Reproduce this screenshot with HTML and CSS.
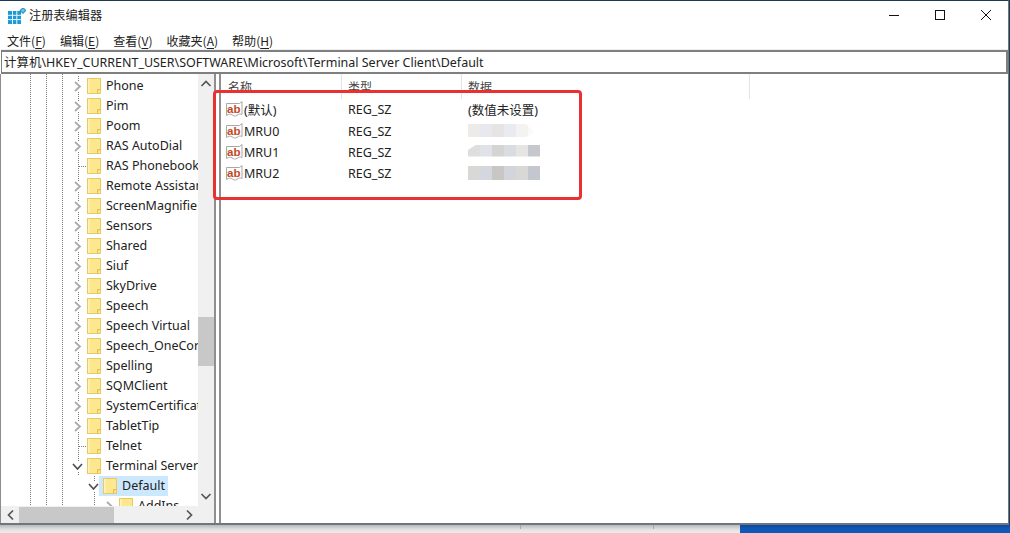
FILE: index.html
```html
<!DOCTYPE html>
<html lang="zh-CN">
<head>
<meta charset="utf-8">
<title>注册表编辑器</title>
<link rel="stylesheet" href="styles.css">
</head>
<body>
<svg class="defs" width="0" height="0" aria-hidden="true">
  <symbol id="folder" viewBox="0 0 14 16">
    <rect x="0.5" y="0.5" width="13" height="15" fill="#fde78f" stroke="#e9c964"/>
    <rect x="1" y="1" width="1.5" height="14" fill="#fff3bd"/>
    <path d="M10.5 15.5v-4h3" fill="#fbdc78" stroke="#e3bd50"/>
  </symbol>
  <symbol id="chev-r" viewBox="0 0 9 11">
    <path d="M2 1l5 4.5-5 4.5" fill="none" stroke="#a8a8a8" stroke-width="1.7"/>
  </symbol>
  <symbol id="chev-d" viewBox="0 0 11 9">
    <path d="M1 2l4.5 5 4.5-5" fill="none" stroke="#505050" stroke-width="1.7"/>
  </symbol>
  <symbol id="ab" viewBox="0 0 17 17">
    <path d="M.5 2.500h13l2.500-2v13c-2-1-3-.5-5 .8s-3 .7-5-.5-3-.5-5.500.7z" fill="#fff" stroke="#a8a8a8"/>
    <text x="7.800" y="11.500" text-anchor="middle" font-family="Liberation Sans" font-weight="700" font-size="11.500" fill="#c24a22">ab</text>
  </symbol>
</svg>
<div class="window">
  <header class="titlebar">
    <svg class="appicon" width="18" height="16" viewBox="0 0 18 16" aria-hidden="true">
      <path d="M0 3h13v13H0z" fill="#1a9ad6"/>
      <path d="M4.500 3v13M8.800 3v13M0 7.300h13M0 11.600h13" stroke="#e8f6fc" stroke-width="1"/>
      <rect x="13" y="0.500" width="4" height="4" fill="#6cc3ea" stroke="#2b8fc0" transform="rotate(45 15 2.500)"/>
    </svg>
    <span class="title">注册表编辑器</span>
    <div class="winbtns">
      <svg class="winbtn" width="46" height="30" viewBox="0 0 46 30" aria-hidden="true"><path d="M18 15.500h10" stroke="#111" fill="none"/></svg>
      <svg class="winbtn" width="46" height="30" viewBox="0 0 46 30" aria-hidden="true"><rect x="18.500" y="10.500" width="9" height="9" stroke="#111" fill="none"/></svg>
      <svg class="winbtn" width="46" height="30" viewBox="0 0 46 30" aria-hidden="true"><path d="M18 10l10 10M28 10L18 20" stroke="#111" fill="none"/></svg>
    </div>
  </header>
  <nav class="menu">
    <span>文件(<u>F</u>)</span>
    <span>编辑(<u>E</u>)</span>
    <span>查看(<u>V</u>)</span>
    <span>收藏夹(<u>A</u>)</span>
    <span>帮助(<u>H</u>)</span>
  </nav>
  <div class="address">计算机\HKEY_CURRENT_USER\SOFTWARE\Microsoft\Terminal Server Client\Default</div>
  <main class="panes">
    <section class="tree">
      <div class="tree-top">
        <div class="tree-view">
          <div class="siblings">
            <div class="row"><svg class="chev" width="9" height="11"><use href="#chev-r"/></svg><svg class="folder" width="14" height="16"><use href="#folder"/></svg><span class="label">Phone</span></div>
            <div class="row"><svg class="chev" width="9" height="11"><use href="#chev-r"/></svg><svg class="folder" width="14" height="16"><use href="#folder"/></svg><span class="label">Pim</span></div>
            <div class="row"><svg class="chev" width="9" height="11"><use href="#chev-r"/></svg><svg class="folder" width="14" height="16"><use href="#folder"/></svg><span class="label">Poom</span></div>
            <div class="row"><svg class="chev" width="9" height="11"><use href="#chev-r"/></svg><svg class="folder" width="14" height="16"><use href="#folder"/></svg><span class="label">RAS AutoDial</span></div>
            <div class="row"><span class="leaf"></span><svg class="folder" width="14" height="16"><use href="#folder"/></svg><span class="label">RAS Phonebook</span></div>
            <div class="row"><svg class="chev" width="9" height="11"><use href="#chev-r"/></svg><svg class="folder" width="14" height="16"><use href="#folder"/></svg><span class="label">Remote Assistance</span></div>
            <div class="row"><svg class="chev" width="9" height="11"><use href="#chev-r"/></svg><svg class="folder" width="14" height="16"><use href="#folder"/></svg><span class="label">ScreenMagnifier</span></div>
            <div class="row"><svg class="chev" width="9" height="11"><use href="#chev-r"/></svg><svg class="folder" width="14" height="16"><use href="#folder"/></svg><span class="label">Sensors</span></div>
            <div class="row"><svg class="chev" width="9" height="11"><use href="#chev-r"/></svg><svg class="folder" width="14" height="16"><use href="#folder"/></svg><span class="label">Shared</span></div>
            <div class="row"><svg class="chev" width="9" height="11"><use href="#chev-r"/></svg><svg class="folder" width="14" height="16"><use href="#folder"/></svg><span class="label">Siuf</span></div>
            <div class="row"><svg class="chev" width="9" height="11"><use href="#chev-r"/></svg><svg class="folder" width="14" height="16"><use href="#folder"/></svg><span class="label">SkyDrive</span></div>
            <div class="row"><svg class="chev" width="9" height="11"><use href="#chev-r"/></svg><svg class="folder" width="14" height="16"><use href="#folder"/></svg><span class="label">Speech</span></div>
            <div class="row"><svg class="chev" width="9" height="11"><use href="#chev-r"/></svg><svg class="folder" width="14" height="16"><use href="#folder"/></svg><span class="label">Speech Virtual</span></div>
            <div class="row"><svg class="chev" width="9" height="11"><use href="#chev-r"/></svg><svg class="folder" width="14" height="16"><use href="#folder"/></svg><span class="label">Speech_OneCore</span></div>
            <div class="row"><svg class="chev" width="9" height="11"><use href="#chev-r"/></svg><svg class="folder" width="14" height="16"><use href="#folder"/></svg><span class="label">Spelling</span></div>
            <div class="row"><svg class="chev" width="9" height="11"><use href="#chev-r"/></svg><svg class="folder" width="14" height="16"><use href="#folder"/></svg><span class="label">SQMClient</span></div>
            <div class="row"><svg class="chev" width="9" height="11"><use href="#chev-r"/></svg><svg class="folder" width="14" height="16"><use href="#folder"/></svg><span class="label">SystemCertificates</span></div>
            <div class="row"><svg class="chev" width="9" height="11"><use href="#chev-r"/></svg><svg class="folder" width="14" height="16"><use href="#folder"/></svg><span class="label">TabletTip</span></div>
            <div class="row"><span class="leaf"></span><svg class="folder" width="14" height="16"><use href="#folder"/></svg><span class="label">Telnet</span></div>
            <div class="row"><svg class="chev-open" width="11" height="9"><use href="#chev-d"/></svg><svg class="folder" width="14" height="16"><use href="#folder"/></svg><span class="label">Terminal Server Client</span></div>
          </div>
          <div class="children">
            <div class="row row-l2"><svg class="chev-open" width="11" height="9"><use href="#chev-d"/></svg><span class="selected"><svg class="folder" width="14" height="16"><use href="#folder"/></svg><span class="label">Default</span></span></div>
            <div class="row row-l3"><svg class="chev" width="9" height="11"><use href="#chev-r"/></svg><svg class="folder" width="14" height="16"><use href="#folder"/></svg><span class="label">AddIns</span></div>
          </div>
        </div>
        <div class="vscroll">
          <svg width="16" height="20" viewBox="0 0 16 20" aria-hidden="true"><path d="M3.500 12l4.500-4.500 4.500 4.500" fill="none" stroke="#555" stroke-width="1.700"/></svg>
          <div class="vtrack"><div class="vthumb"></div></div>
          <svg width="16" height="20" viewBox="0 0 16 20" aria-hidden="true"><path d="M3.500 8l4.500 4.500 4.500-4.500" fill="none" stroke="#555" stroke-width="1.700"/></svg>
        </div>
      </div>
      <div class="hscroll">
        <svg width="18" height="16" viewBox="0 0 18 16" aria-hidden="true"><path d="M12 3.500L7.500 8l4.500 4.500" fill="none" stroke="#555" stroke-width="1.700"/></svg>
        <div class="htrack"><div class="hthumb"></div></div>
        <svg width="19" height="16" viewBox="0 0 19 16" aria-hidden="true"><path d="M7 3.500L11.500 8 7 12.500" fill="none" stroke="#555" stroke-width="1.700"/></svg>
      </div>
    </section>
    <section class="list">
      <div class="list-head">
        <div class="hcell col-name hcell-first"><span>名称</span></div>
        <div class="hcell col-type"><span>类型</span></div>
        <div class="hcell col-data"><span>数据</span></div>
      </div>
      <div class="list-row"><div class="col-name name"><svg width="17" height="17"><use href="#ab"/></svg>(默认)</div><div class="col-type type">REG_SZ</div><div class="col-data data">(数值未设置)</div></div>
      <div class="list-row"><div class="col-name name"><svg width="17" height="17"><use href="#ab"/></svg>MRU0</div><div class="col-type type">REG_SZ</div><div class="col-data data"><span class="blur blur-a"></span></div></div>
      <div class="list-row"><div class="col-name name"><svg width="17" height="17"><use href="#ab"/></svg>MRU1</div><div class="col-type type">REG_SZ</div><div class="col-data data"><span class="blur blur-b"></span></div></div>
      <div class="list-row"><div class="col-name name"><svg width="17" height="17"><use href="#ab"/></svg>MRU2</div><div class="col-type type">REG_SZ</div><div class="col-data data"><span class="blur blur-c"></span></div></div>
      <div class="callout"></div>
    </section>
  </main>
</div>
<footer class="below">
  <div class="below-gray"><i></i><i></i></div>
  <div class="below-blue"></div>
</footer>
</body>
</html>
```
FILE: styles.css
```css
* { box-sizing: border-box; }
html, body { margin: 0; padding: 0; }
body {
  width: 1010px;
  height: 533px;
  overflow: hidden;
  display: flex;
  flex-direction: column;
  background: #1d3c55;
  font-family: "Noto Sans", "Noto Sans CJK SC", sans-serif;
  font-size: 13px;
  color: #1a1a1a;
}
.defs { position: absolute; }

.window {
  width: 1009px;
  height: 525px;
  flex: none;
  display: flex;
  flex-direction: column;
  background: #fff;
  border-top: 1px solid #1f3b50;
  border-bottom: 2px solid #6f7680;
  border-right: 1px solid #6f7680;
  overflow: hidden;
}

.titlebar { height: 29px; flex: none; display: flex; align-items: center; padding-left: 8px; }
.appicon { flex: none; }
.title { margin: 0 0 0 3px; font-family: "Noto Sans CJK SC", sans-serif; font-size: 12.200px; line-height: 29px; color: #222; }
.winbtns { margin-left: auto; display: flex; margin-right: -1px; }
.winbtn { display: block; margin-top: -1px; }

.menu { height: 20px; flex: none; display: flex; gap: 14px; padding: 2px 0 0 7px; align-items: center; font-family: "Noto Sans CJK SC", sans-serif; font-size: 12.050px; line-height: 18px; color: #222; }
.menu u { text-decoration-thickness: 1px; text-underline-offset: 2px; }

.address {
  height: 24px;
  flex: none;
  margin-left: 1px;
  padding-left: 2px;
  line-height: 22px;
  border: 1px solid #7f7f7f;
  border-width: 2px 2px 2px 1px;
  box-shadow: 0 -1px 0 #f0f0f0;
  white-space: nowrap;
  font-size: 12.480px;
  color: #222;
}

.panes { flex: 1; min-height: 0; display: flex; position: relative; }
.tree {
  width: 216px;
  flex: none;
  display: flex;
  flex-direction: column;
  border-left: 1px solid #8d8d8d;
  border-right: 2px solid #8f8f8f;
}
.tree-top { flex: 1; min-height: 0; display: flex; }
.tree-view {
  width: 197px;
  flex: none;
  overflow: hidden;
  padding-top: 2px;
  background-image:
    linear-gradient(#7c7c7c 50%, transparent 50%),
    linear-gradient(#7c7c7c 50%, transparent 50%),
    linear-gradient(#7c7c7c 50%, transparent 50%);
  background-size: 1px 2px;
  background-repeat: repeat-y;
  background-position: 29px 0, 45px 0, 61px 0;
}
.siblings {
  background-image: linear-gradient(#7c7c7c 50%, transparent 50%);
  background-size: 1px 2px;
  background-repeat: repeat-y;
  background-position: 77px 0;
  height: 400px;
}
.children {
  background-image: linear-gradient(#7c7c7c 50%, transparent 50%);
  background-size: 1px 2px;
  background-repeat: repeat-y;
  background-position: 93px 0;
}
.row { height: 20px; display: flex; align-items: center; padding-left: 72px; white-space: nowrap; }
.chev { flex: none; width: 9px; height: 11px; background: #fff; display: block; margin-right: 5px; }
.chev-open { flex: none; width: 11px; height: 9px; background: #fff; display: block; margin: 0 4px 0 -1px; }
.leaf { flex: none; width: 14px; height: 1px; background-image: linear-gradient(90deg, #7c7c7c 50%, transparent 50%); background-size: 2px 1px; background-repeat: repeat-x; background-clip: content-box; padding-left: 5px; }
.folder { flex: none; display: block; }
.label { margin-left: 5px; font-size: 12.500px; line-height: 20px; color: #222; }
.row-l2 { padding-left: 88px; }
.row-l3 { padding-left: 104px; }
.selected { display: flex; align-items: center; height: 20px; background: #cce8ff; padding: 0 3px 0 4px; margin-left: -4px; }

.vscroll { width: 16px; flex: none; background: #f0f0f0; display: flex; flex-direction: column; }
.vscroll svg { display: block; flex: none; }
.vtrack { flex: 1; padding-top: 223px; }
.vthumb { height: 49px; background: #c8c8c8; }

.hscroll { height: 17px; flex: none; display: flex; background: #f0f0f0; width: 213px; padding-top: 1px; }
.hscroll svg { display: block; flex: none; }
.htrack { width: 161px; flex: none; }
.hthumb { width: 95px; height: 16px; background: #c8c8c8; }

.list { flex: 1; min-width: 0; position: relative; margin-left: 3px; border-left: 2px solid #8f8f8f; }
.list-head { height: 25px; display: flex; }
.hcell { height: 25px; border-right: 1px solid #e4e4e4; padding-left: 6px; }
.hcell-first { padding-left: 7px; }
.hcell span { display: block; height: 16px; overflow: hidden; line-height: 26px; font-family: "Noto Sans CJK SC", sans-serif; font-size: 12px; color: #444; }
.col-name { width: 121px; flex: none; }
.col-type { width: 120px; flex: none; }
.col-data { width: 288px; flex: none; }
.list-row { height: 21px; display: flex; align-items: center; white-space: nowrap; font-size: 12.500px; color: #222; }
.name { display: flex; align-items: center; padding-left: 5px; }
.name svg { display: block; margin-right: 1px; flex: none; }
.type { padding-left: 6px; }
.data { padding-left: 6px; }
.list-row + .list-row .type { padding-top: 2px; }
.list-row + .list-row .name { padding-top: 2px; }
.list-row + .list-row .name svg { margin-top: -1px; }
.blur { display: block; height: 14px; width: 72px; filter: blur(.7px); }
.blur-a { height: 13px; width: 66px; background: linear-gradient(90deg, #ecebea 0 12px, #e7e9ee 12px 24px, #e6e5e4 24px 36px, #e9ebf0 36px 48px, #f4f3f1 48px 60px, #fafafa 60px); clip-path: polygon(0 0, 88% 0, 100% 60%, 88% 100%, 0 100%); }
.blur-b { background: linear-gradient(90deg, #dedede 0 12px, #dfe3e8 12px 24px, #d5d4d2 24px 36px, #d9dce0 36px 48px, #e5e5e3 48px 60px, #c5c9ce 60px); clip-path: polygon(0 40%, 12% 0, 100% 0, 100% 85%, 0 85%); }
.blur-c { background: linear-gradient(90deg, #d8d8d6 0 12px, #d4d8de 12px 24px, #c8c7c5 24px 36px, #d2d6da 36px 48px, #d9d8d6 48px 60px, #c4c8ce 60px); }

.callout {
  position: absolute;
  left: -8px;
  top: 16px;
  width: 369px;
  height: 110px;
  border: 3px solid #ea3030;
  border-radius: 4px;
  pointer-events: none;
}

.below { flex: 1; display: flex; }
.below-gray { width: 740px; flex: none; background: linear-gradient(#b9b9b9, #e4e4e4 60%, #ececec); display: flex; }
.below-gray i { width: 1px; height: 4px; background: #a8a8a8; margin-left: 520px; }
.below-gray i + i { margin-left: 132px; }
.below-blue { flex: 1; background: linear-gradient(#0a4a9c, #0d58b8 50%); }
```
